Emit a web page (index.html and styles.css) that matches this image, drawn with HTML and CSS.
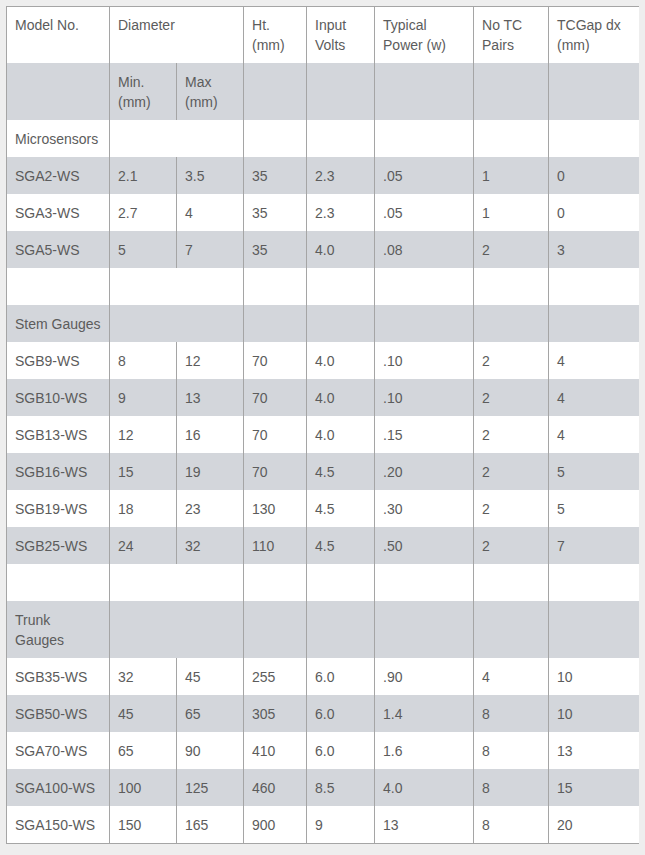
FILE: index.html
```html
<!DOCTYPE html>
<html>
<head>
<meta charset="utf-8">
<link rel="stylesheet" href="styles.css">
</head>
<body>
<table class="spec">
  <colgroup>
    <col class="c-model"><col class="c-min"><col class="c-max"><col class="c-ht"><col class="c-volts"><col class="c-power"><col class="c-pairs"><col class="c-gap">
  </colgroup>
  <tbody>
    <tr class="first"><td>Model No.</td><td colspan="2">Diameter</td><td>Ht. (mm)</td><td>Input Volts</td><td>Typical Power (w)</td><td>No TC Pairs</td><td>TCGap dx (mm)</td></tr>
    <tr><td></td><td>Min. (mm)</td><td>Max (mm)</td><td></td><td></td><td></td><td></td><td></td></tr>
    <tr><td>Microsensors</td><td colspan="2">&nbsp;</td><td></td><td></td><td></td><td></td><td></td></tr>
    <tr><td>SGA2-WS</td><td>2.1</td><td>3.5</td><td>35</td><td>2.3</td><td>.05</td><td>1</td><td>0</td></tr>
    <tr><td>SGA3-WS</td><td>2.7</td><td>4</td><td>35</td><td>2.3</td><td>.05</td><td>1</td><td>0</td></tr>
    <tr><td>SGA5-WS</td><td>5</td><td>7</td><td>35</td><td>4.0</td><td>.08</td><td>2</td><td>3</td></tr>
    <tr><td>&nbsp;</td><td colspan="2"></td><td></td><td></td><td></td><td></td><td></td></tr>
    <tr><td>Stem Gauges</td><td colspan="2"></td><td></td><td></td><td></td><td></td><td></td></tr>
    <tr><td>SGB9-WS</td><td>8</td><td>12</td><td>70</td><td>4.0</td><td>.10</td><td>2</td><td>4</td></tr>
    <tr><td>SGB10-WS</td><td>9</td><td>13</td><td>70</td><td>4.0</td><td>.10</td><td>2</td><td>4</td></tr>
    <tr><td>SGB13-WS</td><td>12</td><td>16</td><td>70</td><td>4.0</td><td>.15</td><td>2</td><td>4</td></tr>
    <tr><td>SGB16-WS</td><td>15</td><td>19</td><td>70</td><td>4.5</td><td>.20</td><td>2</td><td>5</td></tr>
    <tr><td>SGB19-WS</td><td>18</td><td>23</td><td>130</td><td>4.5</td><td>.30</td><td>2</td><td>5</td></tr>
    <tr><td>SGB25-WS</td><td>24</td><td>32</td><td>110</td><td>4.5</td><td>.50</td><td>2</td><td>7</td></tr>
    <tr><td>&nbsp;</td><td colspan="2"></td><td></td><td></td><td></td><td></td><td></td></tr>
    <tr><td>Trunk Gauges</td><td colspan="2"></td><td></td><td></td><td></td><td></td><td></td></tr>
    <tr><td>SGB35-WS</td><td>32</td><td>45</td><td>255</td><td>6.0</td><td>.90</td><td>4</td><td>10</td></tr>
    <tr><td>SGB50-WS</td><td>45</td><td>65</td><td>305</td><td>6.0</td><td>1.4</td><td>8</td><td>10</td></tr>
    <tr><td>SGA70-WS</td><td>65</td><td>90</td><td>410</td><td>6.0</td><td>1.6</td><td>8</td><td>13</td></tr>
    <tr><td>SGA100-WS</td><td>100</td><td>125</td><td>460</td><td>8.5</td><td>4.0</td><td>8</td><td>15</td></tr>
    <tr><td>SGA150-WS</td><td>150</td><td>165</td><td>900</td><td>9</td><td>13</td><td>8</td><td>20</td></tr>
  </tbody>
</table>
</body>
</html>
```

FILE: styles.css
```css
* { box-sizing: border-box; }
html, body { background: #eeeeee; }
body {
  margin: 6px;
  font-family: "Liberation Sans", Arial, sans-serif;
  font-size: 14px;
  line-height: 20px;
  color: #5c5c5c;
}
.spec {
  width: 637px;
  table-layout: fixed;
  border-collapse: separate;
  border-spacing: 0;
  border: 1px solid #a5a5a5;
  background: #ffffff;
}
.c-model { width: 103px; }
.c-min { width: 67px; }
.c-max { width: 67px; }
.c-ht { width: 63px; }
.c-volts { width: 68px; }
.c-power { width: 99px; }
.c-pairs { width: 75px; }
.c-gap { width: 93px; }
.spec td {
  padding: 9px 8px 8px 8px;
  vertical-align: top;
  text-align: left;
  border-right: 1px solid #a5a5a5;
  height: 37px;
}
.spec td:last-child { border-right: 0; }
.spec tr.first td { padding-top: 8px; }
.spec tr:nth-child(even) td { background: #d3d6db; }
```
